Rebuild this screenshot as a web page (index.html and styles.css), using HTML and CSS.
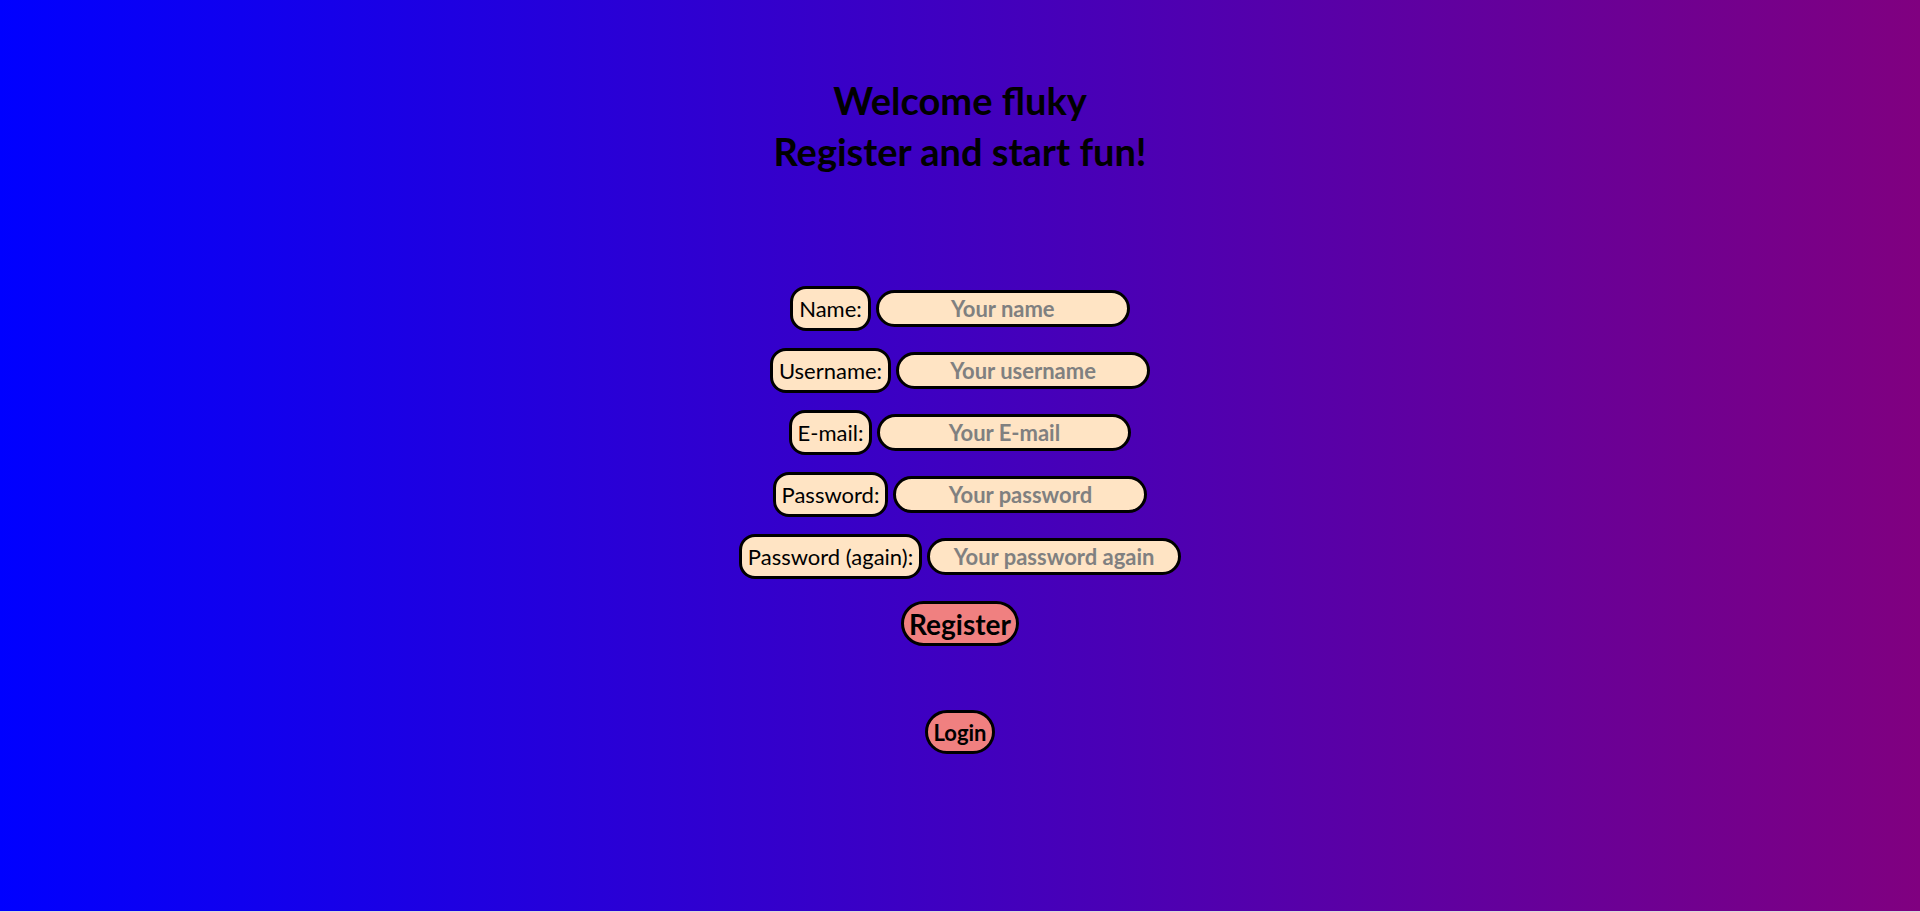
FILE: index.html
```html
<!DOCTYPE html>
<html lang="en">
<head>
<meta charset="utf-8">
<title>Register</title>
<link rel="stylesheet" href="styles.css">
</head>
<body>
<main class="page">
  <h1 class="title">Welcome fluky<br>Register and start fun!</h1>
  <form class="form">
    <div class="row"><label class="label">Name:</label><input class="field" type="text" placeholder="Your name"></div>
    <div class="row"><label class="label">Username:</label><input class="field" type="text" placeholder="Your username"></div>
    <div class="row"><label class="label">E-mail:</label><input class="field" type="text" placeholder="Your E-mail"></div>
    <div class="row"><label class="label">Password:</label><input class="field" type="password" placeholder="Your password"></div>
    <div class="row"><label class="label">Password (again):</label><input class="field" type="password" placeholder="Your password again"></div>
    <button class="btn btn-register" type="button">Register</button>
  </form>
  <button class="btn btn-login" type="button">Login</button>
</main>
</body>
</html>
```
FILE: styles.css
```css
html {
  background: #d9d9d9;
}
body {
  margin: 0;
  font-family: "Lato", "Open Sans", sans-serif;
}
.page {
  height: 911px;
  background: linear-gradient(to right, #0000ff, #800080);
  display: flex;
  flex-direction: column;
  align-items: center;
  box-sizing: border-box;
  padding-top: 75px;
}
.title {
  margin: 0;
  font-size: 38px;
  line-height: 51px;
  font-weight: 700;
  text-align: center;
  color: #000;
}
.form {
  margin-top: 109px;
  display: flex;
  flex-direction: column;
  align-items: center;
  gap: 17px;
}
.row {
  display: flex;
  align-items: center;
  gap: 5px;
}
.label {
  box-sizing: border-box;
  height: 45px;
  line-height: 39px;
  padding: 0 6px;
  border: 3px solid #000;
  border-radius: 16px;
  background: #ffe4c4;
  font-size: 22px;
  color: #000;
}
.field {
  box-sizing: border-box;
  width: 254px;
  height: 37px;
  border: 3px solid #000;
  border-radius: 19px;
  background: #ffe4c4;
  font-family: inherit;
  font-size: 22px;
  font-weight: 700;
  text-align: center;
  color: #000;
  padding: 0 8px;
  outline: none;
}
.field::placeholder {
  color: #808080;
}
.btn {
  box-sizing: border-box;
  border: 3px solid #000;
  background: #f08080;
  font-family: inherit;
  color: #000;
  padding: 0 5px;
}
.btn-register {
  margin-top: 5px;
  height: 45px;
  border-radius: 23px;
  font-size: 28px;
  font-weight: 700;
}
.btn-login {
  margin-top: 64px;
  height: 44px;
  border-radius: 22px;
  font-size: 22px;
  font-weight: 700;
}
```
